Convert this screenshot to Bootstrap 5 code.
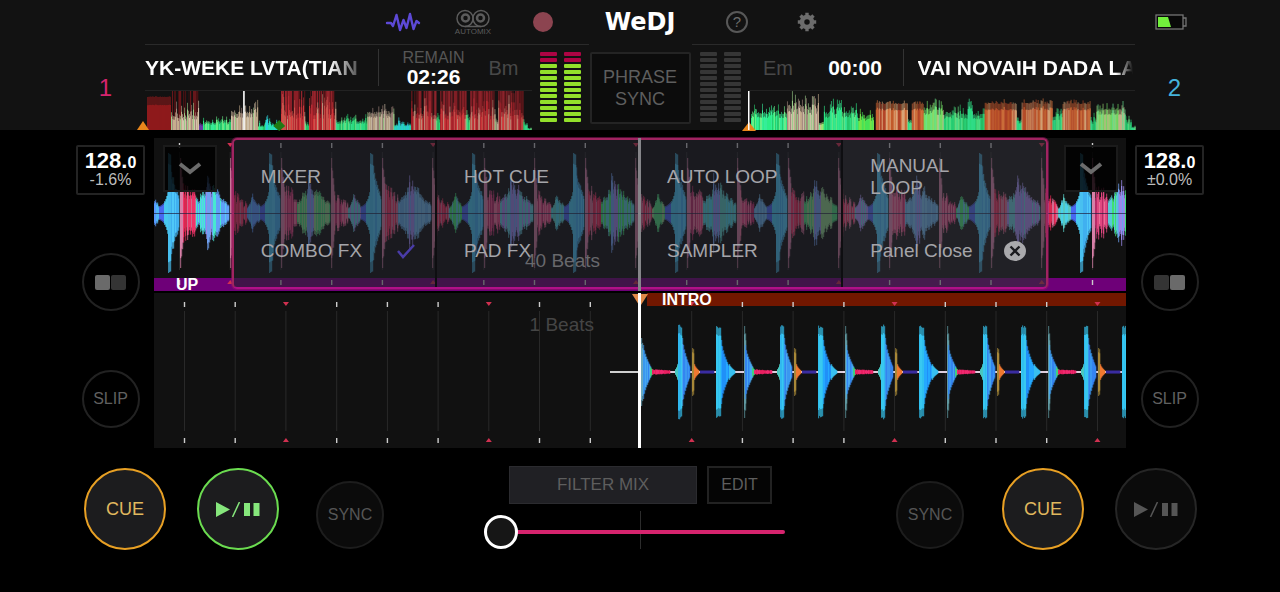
<!DOCTYPE html>
<html lang="en" data-bs-theme="dark">
<head>
<meta charset="utf-8">
<meta name="viewport" content="width=device-width, initial-scale=1">
<title>WeDJ</title>
<link rel="stylesheet" href="https://cdn.jsdelivr.net/npm/bootstrap@5.3.0/dist/css/bootstrap.min.css">
<style>
  body { background: #000; color: #fff; font-family: "Liberation Sans", Arial, sans-serif; font-size: 18px; line-height: 22px; min-width: 1100px; }
  button { background: none; border: 0; padding: 0; color: inherit; }
  svg { display: block; }

  .head-panel { background: #121212; }
  .toolbar-grid { display: grid; grid-template-columns: 1fr 70px 70px 70px 124px 70px 70px 70px 1fr; height: 44px; align-items: center; justify-items: center; }
  .tool-first { grid-column: 2; }
  .auto-label { font-size: 8px; line-height: 8px; color: #5c5c5c; }
  .rec-dot { width: 20px; height: 20px; border-radius: 50%; background: #8c4450; }
  .brand-name { font-family: "DejaVu Sans", sans-serif; font-weight: 700; font-size: 24px; line-height: 24px; margin: 0; }
  .help-ring { width: 22px; height: 22px; border: 2px solid #585858; border-radius: 50%; color: #6c6c6c; font-size: 15px; line-height: 18px; }
  .battery-slot { grid-column: 9; justify-self: end; margin-right: 93px; }

  .deck-grid { display: grid; grid-template-columns: 145px minmax(0, 1fr) 57px 103px 57px minmax(0, 1fr) 145px; }
  .deck-no { font-size: 24px; line-height: 24px; padding-top: 32px; text-align: center; }
  .no-one { color: #d6246e; padding-left: 66px; }
  .no-two { color: #45b4dc; padding-right: 66px; }
  .rule-top { border-top: 1px solid #2a2a2a; }
  .deck-info { height: 46px; border-bottom: 1px solid #222; }
  .track-title { font-size: 21px; font-weight: 700; line-height: 26px; white-space: nowrap; overflow: hidden; flex: 1 1 0; min-width: 0; margin: 0; }
  .fade-one { margin-right: 19px; -webkit-mask-image: linear-gradient(to right, #000 86%, rgba(0,0,0,.25)); mask-image: linear-gradient(to right, #000 86%, rgba(0,0,0,.25)); }
  .fade-two { margin: 0 2px 0 14px; -webkit-mask-image: linear-gradient(to right, #000 92%, transparent); mask-image: linear-gradient(to right, #000 92%, transparent); }
  .info-sep { width: 1px; height: 37px; background: #333; }
  .time-cell { width: 110px; text-align: center; }
  .time-cell small { display: block; font-size: 16px; line-height: 18px; color: #565656; }
  .time-val { font-size: 21px; line-height: 20px; font-weight: 700; }
  .time-two { width: 95px; }
  .key-cell { font-size: 20px; color: #484848; text-align: center; }
  .key-one { width: 43px; text-align: left; }
  .key-two { width: 59px; }

  .meter { display: flex; gap: 7px; padding-top: 7px; justify-content: center; }
  .meter-col { display: grid; gap: 2px; align-content: start; }
  .meter-col i { width: 17px; height: 4px; border-radius: 1px; background: #363636; }
  .meter-live i { background: #93e02b; }
  .meter-live i:nth-child(-n+2) { background: #ad0444; }
  .phrase-btn { background: #0c0c0c; border: 2px solid #242424; color: #5e5e5e; height: 72px; width: 101px; margin-top: 8px; border-radius: 2px; }

  .main-grid { display: grid; grid-template-columns: 154px minmax(0, 1fr) 154px; padding-top: 8px; }
  .side-col { display: flex; flex-direction: column; align-items: center; padding-top: 7px; }
  .side-one { padding-left: 67px; }
  .side-two { padding-right: 67px; }
  .tempo-btn { width: 69px; height: 50px; border: 2px solid #242424; border-radius: 2px; line-height: 18px; }
  .tempo-btn b { font-size: 22px; }
  .tempo-btn b span { font-size: 16px; }
  .tempo-btn em { display: block; font-style: normal; font-size: 16px; line-height: 16px; color: #bdbdbd; }
  .ring { width: 58px; height: 58px; border: 2px solid #222; border-radius: 50%; font-size: 16px; color: #606060; display: flex; align-items: center; justify-content: center; }
  .ring-pads { margin-top: 58px; gap: 1px; }
  .ring-pads i { width: 15px; height: 15px; border-radius: 2px; background: #343434; }
  .ring-pads i.lit { background: #6a6a6a; }
  .ring-slip { margin-top: 59px; }

  .lane { position: relative; background: #111; }
  .lane-upper { margin-bottom: 2px; }
  .lane > svg { width: 100%; }
  .lane-label { position: absolute; font-weight: 700; font-size: 16px; line-height: 14px; }
  .beats-note { position: absolute; z-index: 3; font-size: 19px; }
  .note-one { top: 112px; right: calc(50% + 40px); color: #68686c; }
  .note-two { top: 21px; right: calc(50% + 46px); color: #454545; }
  .open-btn { position: absolute; top: 7px; width: 54px; height: 47px; background: rgba(0,0,0,.82); border: 2px solid #1b1b1b; display: flex; align-items: center; justify-content: center; z-index: 1; }
  .pick-panel { position: absolute; left: 8%; right: 8%; top: 0; height: 151px; border: 2px solid #a02460; border-bottom-color: #b01088; box-shadow: 0 0 0 1px rgba(150,24,100,.55); border-radius: 5px; background: rgba(34,34,41,.6); display: grid; grid-template-columns: repeat(4, 1fr); grid-template-rows: 74px 73px; z-index: 2; }
  .pick-panel button { display: flex; align-items: center; justify-content: space-between; text-align: left; padding: 0 20px 0 27px; color: #a5a5aa; border-right: 2px solid #0e0e11; font-size: 19px; }
  .pick-panel button:nth-child(4n) { border-right: 0; background: rgba(255,255,255,.03); }
  .playhead { position: absolute; left: 50%; top: 0; width: 3px; margin-left: -2px; height: 100%; background: #fff; z-index: 3; }
  .playhead-dim { background: #86868a; }

  .foot-row { padding: 20px 83px 0 84px; display: grid; grid-template-columns: 1fr auto 1fr; }
  .round-btn { width: 82px; height: 82px; border-radius: 50%; border: 2px solid #262626; background: #0b0b0b; color: #565656; display: flex; align-items: center; justify-content: center; }
  .cue-btn { border-color: #e8a024; background: #1c1c1e; color: #e0b85e; }
  .play-live { border-color: #6bdc50; background: #1c1c1e; color: #86e67c; }
  .sync-btn { width: 68px; height: 68px; font-size: 16px; border-color: #1d1d1d; }
  .sync-one { margin: 13px 0 0 37px; }
  .sync-two { margin: 13px 38px 0 0; }
  .gap-pair { gap: 31px; }
  .mix-btn { width: 188px; height: 38px; background: #202024; border: 1px solid #2b2b2f; color: #5e5e5e; font-size: 17px; }
  .edit-btn { width: 65px; height: 38px; border: 2px solid #222; background: #050505; color: #5e5e5e; font-size: 16px; }
  .mix-pair { gap: 10px; margin-top: -2px; justify-content: center; }
  .fader { width: 314px; padding-top: 11px; background: linear-gradient(#2c2c2c, #2c2c2c) center 7px / 1px 42px no-repeat; }
  .fader input { -webkit-appearance: none; appearance: none; display: block; width: 301px; height: 34px; margin: 0; background: none; }
  .fader input::-webkit-slider-runnable-track { height: 4px; border-radius: 2px; background: #d6246e; }
  .fader input::-webkit-slider-thumb { -webkit-appearance: none; width: 34px; height: 34px; margin-top: -15px; border: 3px solid #fff; border-radius: 50%; background: #161616; }
</style>
</head>
<body>
<header class="head-panel">
  <nav class="toolbar-grid" aria-label="Tools">
    <button class="tool-first" aria-label="Waveform"><svg width="36" height="24" viewBox="0 0 36 24" fill="none" stroke="#5d49d6" stroke-width="2.400" stroke-linejoin="round" stroke-linecap="round"><path d="M2 13h4l2 3L11.500 5l3.500 15 3.500-10 3 8L25 4l3.500 15 3-8 2.500 2"/></svg></button>
    <button class="d-flex flex-column align-items-center" aria-label="Automix"><svg width="34" height="19" viewBox="0 0 34 19" fill="none" stroke="#5c5c5c"><circle cx="9" cy="9.500" r="8" stroke-width="1.500"/><circle cx="25" cy="9.500" r="8" stroke-width="1.500"/><circle cx="9.500" cy="9" r="3.500" stroke-width="2.500"/><circle cx="24.500" cy="9" r="3.500" stroke-width="2.500"/><path d="M9 17.500h16" stroke-width="1.500"/></svg><span class="auto-label">AUTOMIX</span></button>
    <button class="rec-dot" aria-label="Record"></button>
    <h1 class="brand-name">WeDJ</h1>
    <button class="help-ring" aria-label="Help">?</button>
    <button aria-label="Settings"><svg width="20" height="20" viewBox="0 0 20 20"><circle cx="10" cy="10" r="5" fill="none" stroke="#6c6c6c" stroke-width="4.500"/><path d="M10 .8v4M10 15.200v4M.8 10h4M15.200 10h4M3.500 3.500l3 3M13.500 13.500l3 3M3.500 16.500l3-3M13.500 6.500l3-3" stroke="#6c6c6c" stroke-width="3.400"/></svg></button>
    <svg class="battery-slot" width="32" height="16" viewBox="0 0 32 16" role="img" aria-label="Battery"><rect x="1" y="1" width="27" height="14" fill="#080808" stroke="#747474" stroke-width="1.300"/><path d="M28 4h3v8h-3" fill="none" stroke="#747474" stroke-width="1.300"/><path d="M3 3h10l3 10H3z" fill="#72f03c"/></svg>
  </nav>

  <div class="deck-grid">
    <div class="deck-no no-one">1</div>
    <section class="rule-top">
      <div class="deck-info d-flex align-items-center">
        <h2 class="track-title fade-one">YK-WEKE LVTA(TIAN</h2>
        <span class="info-sep"></span>
        <div class="time-cell"><small>REMAIN</small><div class="time-val">02:26</div></div>
        <span class="key-cell key-one">Bm</span>
      </div>
      <svg id="overviewOne" width="100%" height="39" viewBox="0 0 386 39" preserveAspectRatio="none" overflow="visible"></svg>
    </section>
    <div class="meter meter-live rule-top" data-meter></div>
    <div class="d-flex justify-content-center align-items-start"><button class="phrase-btn">PHRASE SYNC</button></div>
    <div class="meter rule-top" data-meter></div>
    <section class="rule-top">
      <div class="deck-info d-flex align-items-center">
        <span class="key-cell key-two">Em</span>
        <div class="time-cell time-two"><div class="time-val">00:00</div></div>
        <span class="info-sep"></span>
        <h2 class="track-title fade-two">VAI NOVAIH DADA LA</h2>
      </div>
      <svg id="overviewTwo" width="100%" height="39" viewBox="0 0 387 39" preserveAspectRatio="none" overflow="visible"></svg>
    </section>
    <div class="deck-no no-two">2</div>
  </div>
</header>

<main>
  <div class="main-grid">
    <aside class="side-col side-one">
      <button class="tempo-btn"><b>128.<span>0</span></b><em>-1.6%</em></button>
      <button class="ring ring-pads" aria-label="Left pads"><i class="lit"></i><i></i></button>
      <button class="ring ring-slip">SLIP</button>
    </aside>

    <div>
      <section class="lane lane-upper">
        <svg id="laneOne" height="153" viewBox="0 0 972 153" preserveAspectRatio="none"></svg>
        <span class="lane-label" style="left:22px;bottom:-1px">UP</span>
        <span class="beats-note note-one">40 Beats</span>
        <button class="open-btn" style="left:9px" aria-label="Deck 1 panel"><svg width="24" height="14" viewBox="0 0 24 14"><path d="M2 2l10 8L22 2" fill="none" stroke="#6c6c6c" stroke-width="4"/></svg></button>
        <button class="open-btn" style="right:8px" aria-label="Deck 2 panel"><svg width="24" height="14" viewBox="0 0 24 14"><path d="M2 2l10 8L22 2" fill="none" stroke="#6c6c6c" stroke-width="4"/></svg></button>
        <div class="pick-panel">
          <button>MIXER</button><button>HOT CUE</button><button>AUTO LOOP</button><button>MANUAL<br>LOOP</button>
          <button>COMBO FX <svg width="18" height="16" viewBox="0 0 18 16"><path d="M1 8l5 6L17 2" fill="none" stroke="#4a3ca8" stroke-width="2.500"/></svg></button>
          <button>PAD FX</button><button>SAMPLER</button>
          <button>Panel Close <svg width="22" height="20" viewBox="0 0 22 20"><ellipse cx="11" cy="10" rx="11" ry="10" fill="#a9a9ac"/><path d="M6.500 5.500l9 9M15.500 5.500l-9 9" stroke="#1b1b1f" stroke-width="2.400"/></svg></button>
        </div>
        <span class="playhead playhead-dim"></span>
      </section>
      <section class="lane">
        <svg id="laneTwo" height="155" viewBox="0 0 972 155" preserveAspectRatio="none"></svg>
        <span class="lane-label" style="left:calc(50% + 22px);top:0">INTRO</span>
        <span class="beats-note note-two">1 Beats</span>
        <span class="playhead"></span>
      </section>
    </div>

    <aside class="side-col side-two">
      <button class="tempo-btn"><b>128.<span>0</span></b><em>±0.0%</em></button>
      <button class="ring ring-pads" aria-label="Right pads"><i></i><i class="lit"></i></button>
      <button class="ring ring-slip">SLIP</button>
    </aside>
  </div>

  <div class="foot-row">
    <div class="d-flex align-items-start">
      <div class="d-flex gap-pair">
        <button class="round-btn cue-btn">CUE</button>
        <button class="round-btn play-live" aria-label="Play or pause"><svg width="44" height="15" viewBox="0 0 44 15"><path d="M0 0l14 7.500L0 15zM28 1h6v13h-6zM37.500 1h6v13h-6z" fill="currentColor"/><path d="M16.500 15l7-15" stroke="currentColor" stroke-width="1.500"/></svg></button>
      </div>
      <button class="round-btn sync-btn sync-one">SYNC</button>
    </div>
    <div>
      <div class="d-flex mix-pair"><button class="mix-btn">FILTER MIX</button><button class="edit-btn">EDIT</button></div>
      <div class="fader"><input type="range" min="0" max="100" value="0" aria-label="Crossfader"></div>
    </div>
    <div class="d-flex align-items-start justify-content-end">
      <button class="round-btn sync-btn sync-two">SYNC</button>
      <div class="d-flex gap-pair">
        <button class="round-btn cue-btn">CUE</button>
        <button class="round-btn" aria-label="Play or pause"><svg width="44" height="15" viewBox="0 0 44 15"><path d="M0 0l14 7.500L0 15zM28 1h6v13h-6zM37.500 1h6v13h-6z" fill="currentColor"/><path d="M16.500 15l7-15" stroke="currentColor" stroke-width="1.500"/></svg></button>
      </div>
    </div>
  </div>
</main>

<script src="https://cdn.jsdelivr.net/npm/bootstrap@5.3.0/dist/js/bootstrap.bundle.min.js"></script>
<script>
  let seed = 7;
  const rnd = () => (seed = (seed * 16807) % 2147483647) / 2147483647;
  const bar = (x, y, w, h, c, o = 1) => `<rect x="${x.toFixed(1)}" y="${y.toFixed(1)}" width="${w}" height="${h.toFixed(1)}" fill="${c}" opacity="${o}"/>`;
  const tri = (x, y, s, c) => `<path d="M${x - 3} ${y}h6l-3 ${s}z" fill="${c}"/>`;

  document.querySelectorAll('[data-meter]').forEach(m => {
    m.innerHTML = ('<div class="meter-col">' + '<i></i>'.repeat(12) + '</div>').repeat(2);
  });

  // Track overviews: [from, to, min height, max height, colours, tall backdrop colours]
  const RED = ['#b3232c', '#c8303a', '#e04040', '#d05a50', '#c9a088'], GRN = ['#2ff08a', '#39f09c', '#28d070', '#6cf08a'],
        TAN = ['#c9b090', '#9fd08c', '#d8c8b0', '#a88a80'], CYA = ['#28f0c0', '#30e0e8'], ORG = ['#d0602e', '#e07840', '#c04a2c', '#e8b080'],
        LIM = ['#7cf06c', '#a8e87c', '#d8c898', '#72f8a0'];
  function overview(id, parts, extra) {
    let s = '';
    for (const [a, b, lo, hi, cols, back] of parts) for (let x = a; x < b; x++) {
      if (back && rnd() < .82) s += bar(x, 0, 1, 39, back[Math.floor(rnd() * back.length)]);
      const h = lo + rnd() * rnd() * (hi - lo) * 1.3;
      const n = Math.floor(rnd() * cols.length);
      s += bar(x, 39 - h, 1, h, cols[n], .6);
      s += bar(x, 39 - h * .75, 1, h * .75, cols[n]);
    }
    document.getElementById(id).innerHTML = s + extra;
  }
  const DK = ['#7c1a1f', '#a3222b', '#5a1418', '#b32a34'], DIM = ['#4a1214', '#6c181c', '#241212'];
  overview('overviewOne', [[2,26,33,34,['#8f1a1c']],[26,54,12,28,TAN,DIM],[54,58,6,8,['#6a3ca8']],[58,86,7,14,GRN],[86,98,16,26,TAN],[99,113,16,28,TAN],
    [113,120,4,9,GRN],[120,135,5,16,CYA],[136,160,14,36,RED,DK],[160,164,5,12,GRN],[164,191,14,38,RED,DK],[191,222,8,15,GRN],[222,249,16,28,TAN],
    [249,266,5,13,CYA],[266,291,14,36,RED,DK],[291,295,10,22,GRN],[295,321,14,30,RED,DK],[321,325,8,24,GRN],[325,349,14,36,RED,DK],[349,353,8,18,TAN],[353,378,14,36,RED,DK],[378,382,5,14,GRN],[382,386,1,3,GRN]],
    bar(98, 0, 1.6, 39, '#fff') + '<path d="M-8 39l6-9 6 9z" fill="#e8861c"/><path d="M134 29l6 6-6 5-6-5z" fill="#1f7a14"/>');
  overview('overviewTwo', [[2,38,16,25,GRN],[38,70,20,37,TAN],[70,75,5,10,LIM],[75,109,16,30,GRN],[109,125,12,22,['#4cf05c','#7cf04c']],[127,159,26,30,ORG],[159,163,8,14,GRN],
    [163,175,26,29,ORG],[175,195,20,35,LIM],[195,236,14,29,GRN],[236,268,26,30,ORG],[268,273,8,18,GRN],[273,304,26,31,ORG],[304,314,12,24,GRN],[314,342,26,31,ORG],
    [342,348,8,18,GRN],[348,377,20,31,LIM],[377,383,6,22,GRN],[383,387,1,4,GRN]],
    '<path d="M-7 40l7-9 7 9z" fill="#e8861c"/>' + bar(-1, 0, 1.5, 39, '#fff'));

  // Scrolling waveform: mirrored bars around the centre line, decays are concave
  function seg(mid, x0, x1, h0, h1, cols, jag = 0) {
    let s = '';
    for (let x = x0; x < x1; x++) {
      if (x < 0 || x > 971) continue;
      const t = Math.pow((x - x0) / (x1 - x0), h0 > h1 ? .7 : 1.4), h = (h0 + (h1 - h0) * t) * (1 - jag * rnd());
      const c = cols[Math.floor(rnd() * cols.length)];
      s += bar(x, mid - h, 1.2, h * 2, c, .65) + bar(x, mid - h * .82, 1.2, h * 1.64, c);
    }
    return s;
  }
  function beats(first, redAt, top, bottom, lineTop, lineBottom, skip) {
    let s = '';
    for (let i = 0; first + i * 50.72 < 972; i++) {
      const x = first + i * 50.72;
      if (skip && Math.abs(x - 486) < 5) continue;
      s += bar(x - .5, lineTop, 1, lineBottom - lineTop, '#3a3a3a', .6);
      s += i % 4 === redAt ? tri(x, top, 4, '#d03050') + tri(x, bottom + 4, -4, '#d03050') : bar(x - .7, top, 1.4, 5, '#ccc') + bar(x - .7, bottom, 1.4, 5, '#ccc');
    }
    return s;
  }

  let one = bar(0, 140, 972, 13, '#6e0078') + beats(25.500, 1, 5, 142, 14, 132);
  const teal = [['#4ad0e8','#58c8c0'],['#4cd87c','#8cd088'],['#70b8e8','#60a8e0'],['#a088e8','#60c8d8'],['#40e070','#58c8d8']];
  for (let k = -1; k < 10; k++) {
    const K = 15 + k * 101.400 | 0, A = k < 1 ? ['#58c8f0','#60a0f8','#48e8d0'] : teal[(k + 5) % 5], B = k < 1 ? ['#5898ff','#50b8f8'] : teal[(k + 7) % 5],
          P = k % 2 ? ['#e04880','#e87098','#b82c68'] : ['#d82850','#d06c90','#f03468'];
    one += seg(75, K - 5, K, 12, 30, ['#48c8f0']) + seg(75, K - 1, K + 2, 60, 58, ['#48c0f0']) + seg(75, K + 2, K + 10, 48, 16, ['#50c8f8','#40b0f0'], .15)
      + seg(75, K + 11, K + 14, 55, 30, ['#d880a8']) + seg(75, K + 14, K + 27, 30, 24, P, .55)
      + seg(75, K + 27, K + 37, 16, 28, A, .35) + seg(75, K + 37, K + 44, 42, 28, ['#6ea0f0','#9888e8'], .45) + seg(75, K + 44, K + 60, 32, 10, A, .35)
      + seg(75, K + 61, K + 64, 55, 28, ['#c87898']) + seg(75, K + 64, K + 78, 28, 10, P, .55)
      + seg(75, K + 78, K + 84, 6, 24, B, .25) + seg(75, K + 84, K + 91, 20, 8, B, .3) + seg(75, K + 91, K + 97, 7, 12, ['#4868f0']);
  }
  one += bar(0, 75, 972, 1, '#202040', .7);
  document.getElementById('laneOne').innerHTML = one;

  let two = bar(493, 0, 479, 13, '#721700') + beats(30.500, 2, 9, 145, 18, 138, true);
  const M = 79;
  for (let k = 0; k < 5; k++) {
    const X = 487 + Math.round(k * 101.500), blue = ['#3a98f0','#3484f0','#48a8f0'];
    two += seg(M, X - 1, Math.min(X + 101, 972), 1, 1, ['#e8d8e8'])
      + (k ? seg(M, X + 1, X + 3, 46, 34, ['#6098a0']) : seg(M, X, X + 2, 34, 26, ['#68a8c0'])) + seg(M, X + 2, X + 10, 27, 4, blue) + seg(M, X + 9, X + 12, 5, 2, ['#40d080'])
      + seg(M, X + 11, X + 29, 3, 2, ['#e82060','#f02870'], .3) + seg(M, X + 34, X + 37, 3, 12, ['#48c8c0'])
      + seg(M, X + 37, X + 41, 48, 47, ['#38c8f0','#30b8f0'], .06) + seg(M, X + 41, X + 49, 34, 4, blue)
      + seg(M, X + 51, X + 53, 24, 22, ['#a88838']) + seg(M, X + 53, X + 58, 8, 1, ['#f07830']) + seg(M, X + 59, X + 73, 1.500, 1.500, ['#3a2ca0'])
      + seg(M, X + 75, X + 80, 47, 46, ['#38c8f0','#30c0f0'], .06) + seg(M, X + 80, X + 88, 32, 5, ['#24a8ff','#2090f8']) + seg(M, X + 88, X + 94, 8, 1, ['#38c0f0']);
  }
  two += bar(456, M - 1, 30, 2, '#d0d0d0') + '<path d="M478 1h16l-7 11h-2z" fill="#e08a48"/>';
  document.getElementById('laneTwo').innerHTML = two;
</script>
</body>
</html>
